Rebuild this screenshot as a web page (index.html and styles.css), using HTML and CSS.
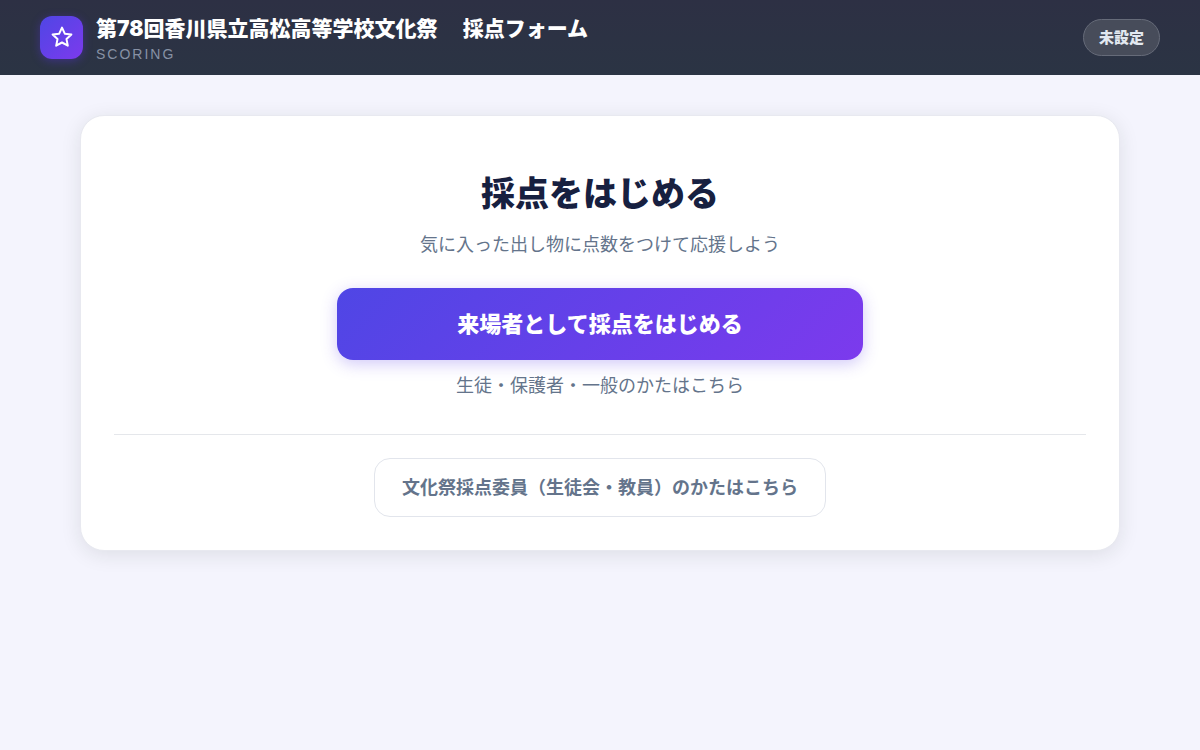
FILE: index.html
```html
<!DOCTYPE html>
<html lang="ja">
<head>
  <meta charset="UTF-8">
  <meta name="viewport" content="width=device-width, initial-scale=1">
  <title>採点フォーム</title>
  <link rel="stylesheet" href="styles.css">
</head>
<body>
  <header class="header">
    <div class="brand">
      <div class="brand-icon">
        <svg width="24" height="24" viewBox="0 0 24 24" fill="none" stroke="currentColor" stroke-width="2" stroke-linejoin="round" aria-hidden="true">
          <path d="M12 1.6l2.8 6.1 6.6.8-4.9 4.6 1.3 6.6-5.8-3.2-5.8 3.2 1.3-6.6-4.9-4.6 6.6-.8z"/>
        </svg>
      </div>
      <div>
        <h1 class="brand-title">第78回香川県立高松高等学校文化祭 　採点フォーム</h1>
        <p class="brand-sub">SCORING</p>
      </div>
    </div>
    <span class="status">未設定</span>
  </header>

  <main class="container">
    <section class="card">
      <h2 class="card-title">採点をはじめる</h2>
      <p class="card-lead">気に入った出し物に点数をつけて応援しよう</p>
      <button type="button" class="btn btn-primary">来場者として採点をはじめる</button>
      <p class="card-note">生徒・保護者・一般のかたはこちら</p>
      <div class="card-footer">
        <button type="button" class="btn btn-secondary">文化祭採点委員（生徒会・教員）のかたはこちら</button>
      </div>
    </section>
  </main>
</body>
</html>
```
FILE: styles.css
```css
* {
  box-sizing: border-box;
}

body {
  margin: 0;
  min-height: 100vh;
  background: #f4f4fd;
  color: #172040;
  font-family: Inter, "Noto Sans CJK JP", sans-serif;
}

h1, h2, p {
  margin: 0;
}

.header {
  display: flex;
  align-items: center;
  justify-content: space-between;
  gap: 16px;
  padding: 12px 40px;
  background: linear-gradient(180deg, #2d3044, #2b3444);
}

.brand {
  display: flex;
  align-items: center;
  gap: 13px;
}

.brand-icon {
  display: flex;
  align-items: center;
  justify-content: center;
  flex-shrink: 0;
  width: 43px;
  height: 43px;
  border-radius: 12px;
  background: linear-gradient(135deg, #4f46e5, #7c3aed);
  box-shadow: 0 2px 10px rgba(91, 50, 230, 0.4);
  color: #fff;
}

.brand-title {
  color: #fff;
  font-size: 21px;
  font-weight: 900;
  line-height: 34px;
}

.brand-sub {
  color: #8791a5;
  font-family: "Liberation Sans", sans-serif;
  font-size: 14px;
  line-height: 17px;
  letter-spacing: 2px;
}

.status {
  flex-shrink: 0;
  padding: 7px 15px;
  border: 1px solid #666b79;
  border-radius: 999px;
  background: #474c5a;
  color: #e2e8f0;
  font-size: 15px;
  font-weight: 800;
  line-height: 21px;
}

.container {
  max-width: 1120px;
  margin: 0 auto;
  padding: 40px;
}

.card {
  display: flex;
  flex-direction: column;
  align-items: center;
  padding: 48px 33px 33px;
  border: 1px solid #e8e9f0;
  border-radius: 24px;
  background: #fff;
  box-shadow: 0 4px 20px rgba(30, 35, 30, 0.1);
  text-align: center;
}

.card-title {
  font-size: 34px;
  font-weight: 800;
  line-height: 60px;
}

.card-lead,
.card-note {
  color: #64748b;
  font-size: 18px;
  line-height: 30px;
}

.card-lead {
  margin: 6px 0 28px;
}

.card-note {
  margin-top: 11px;
}

.btn {
  border-radius: 16px;
  font-family: inherit;
  font-weight: 700;
  cursor: pointer;
}

.btn-primary {
  width: 100%;
  max-width: 526px;
  padding: 20px;
  border: 0;
  background: linear-gradient(135deg, #4f46e5, #7c3aed);
  box-shadow: 0 4px 16px rgba(91, 60, 230, 0.28);
  color: #fff;
  font-size: 22px;
  font-weight: 800;
  line-height: 32px;
}

.card-footer {
  width: 100%;
  margin-top: 33px;
  padding-top: 23px;
  border-top: 1px solid #e5e7eb;
}

.btn-secondary {
  padding: 15px 27px;
  border: 1px solid #e2e5ec;
  background: #fff;
  color: #64748b;
  font-size: 18px;
  line-height: 27px;
}
```
